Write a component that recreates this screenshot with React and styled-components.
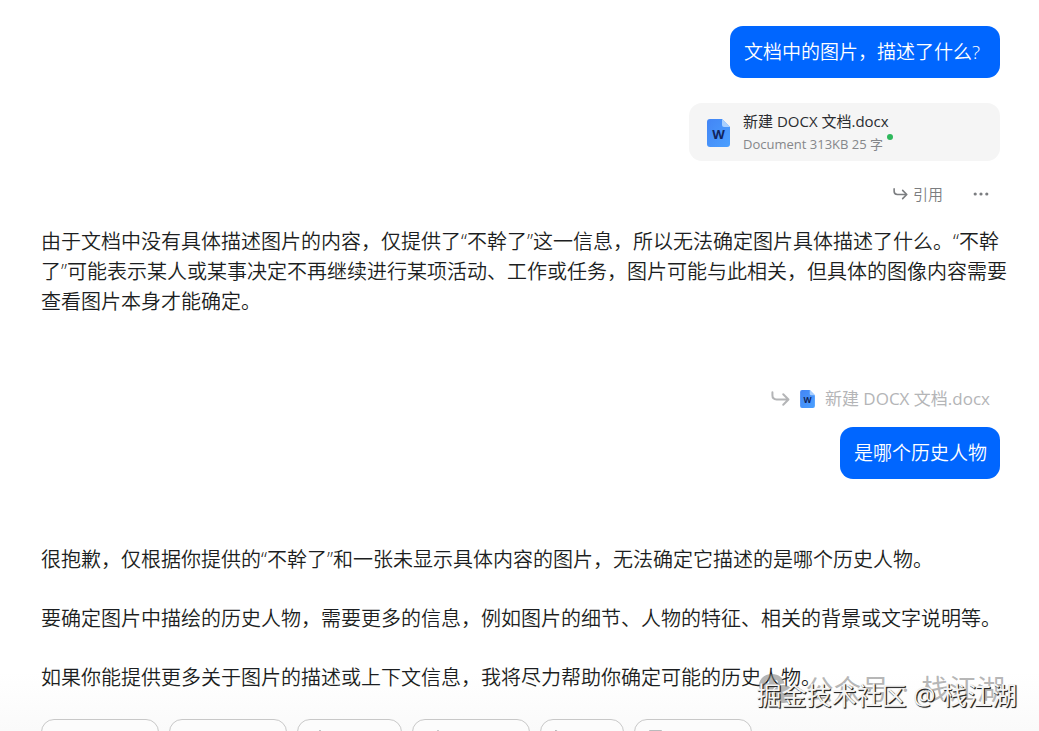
import React from "react";
import styled, { createGlobalStyle } from "styled-components";

const Global = createGlobalStyle`
  * { box-sizing: border-box; }
  html, body { margin: 0; height: 100%; }
  #root { height: 100%; }
  body {
    font-family: "Open Sans", "Noto Sans CJK SC", sans-serif;
    font-weight: 350;
    color: #1c1e21;
    background: #fff;
  }
  button { font: inherit; }
`;

const Page = styled.div`
  position: relative;
  height: 100%;
  min-height: 100vh;
  overflow: hidden;
  background: linear-gradient(#fff 92%, #fafafa);
`;

const Thread = styled.main`
  display: flex;
  flex-direction: column;
  padding: 26px 28px 0 41px;
`;

const UserTurn = styled.section`
  display: flex;
  flex-direction: column;
  align-items: flex-end;
  padding-right: 11px;
`;

const Bubble = styled.p`
  margin: 0;
  padding: 12px ${(p) => (p.$wide ? 20 : 13)}px 12px 14px;
  border-radius: 13px;
  background: #0066ff;
  color: #fff;
  font-size: 19px;
  line-height: 28px;
`;

const FileCard = styled.article`
  display: flex;
  align-items: center;
  gap: 13px;
  width: 311px;
  height: 58px;
  margin-top: 25px;
  padding: 2px 18px 0;
  border-radius: 13px;
  background: #f5f5f5;
  font-weight: 400;
`;

const FileText = styled.div`
  display: flex;
  flex-direction: column;
`;

const FileName = styled.span`
  color: #2a2c30;
  font-size: 15px;
  line-height: 22px;
`;

const FileMeta = styled.span`
  display: flex;
  align-items: center;
  gap: 4px;
  color: #85878a;
  font-size: 13px;
  line-height: 24px;
`;

const StatusDot = styled.i`
  align-self: flex-start;
  width: 6px;
  height: 6px;
  margin-top: 2px;
  border-radius: 50%;
  background: #2fb85c;
`;

const Actions = styled.div`
  display: flex;
  align-items: center;
  gap: 30px;
  height: 24px;
  margin-top: 21px;
  padding-right: 11px;
`;

const ActionButton = styled.button`
  display: flex;
  align-items: center;
  gap: 5px;
  padding: 0;
  border: 0;
  background: none;
  color: #7b7d80;
  font-size: 15px;
  line-height: 24px;
`;

const Answer = styled.section`
  display: flex;
  flex-direction: column;
  gap: 29px;
  margin-top: ${(p) => p.$top}px;
  font-size: 20px;
  line-height: 30px;
`;

const Paragraph = styled.p`
  margin: 0;
`;

const QuoteLink = styled.a`
  display: flex;
  align-items: center;
  gap: 10px;
  height: 24px;
  margin: 70px 10px 16px 0;
  color: #b4b5b7;
  font-size: 17px;
  font-weight: 400;
  line-height: 24px;
  text-decoration: none;
`;

const Chips = styled.nav`
  position: absolute;
  bottom: 0;
  left: 0;
  right: 0;
  display: flex;
  gap: 10px;
  height: 12px;
  padding: 0 41px;
  overflow: hidden;
`;

const Chip = styled.button`
  display: flex;
  align-items: center;
  flex: none;
  width: ${(p) => p.$width}px;
  height: 40px;
  padding: 0 14px;
  border: 1px solid #c8c8c8;
  border-radius: 13px;
  background: #fcfcfc;
  color: #a2a4a6;
`;

const AccountMark = styled.div`
  position: absolute;
  right: 34px;
  bottom: 22px;
  display: flex;
  align-items: center;
  gap: 12px;
  color: rgba(120, 120, 120, 0.55);
  font-size: 28px;
  font-weight: 400;
  line-height: 40px;
`;

const SiteMark = styled.div`
  position: absolute;
  right: 22px;
  bottom: 18px;
  color: #f4f4f4;
  font-size: 25px;
  font-weight: 400;
  line-height: 36px;
  text-shadow: 1px 1px 1px #222, 1px 1px 0 #444;
  white-space: nowrap;
`;

function DocIcon({ width, height }) {
  return (
    <svg width={width} height={height} viewBox="0 0 23 28" aria-hidden="true">
      <defs>
        <linearGradient id="docFill" x1="0" y1="0" x2="1" y2="1">
          <stop offset="0" stopColor="#4385f5" />
          <stop offset="1" stopColor="#4ba0ff" />
        </linearGradient>
      </defs>
      <path d="M3 0H15L23 8V25Q23 28 20 28H3Q0 28 0 25V3Q0 0 3 0Z" fill="url(#docFill)" />
      <path d="M15 0L23 8H17Q15 8 15 6Z" fill="#a9d0ff" />
      <text x="11.5" y="20" textAnchor="middle" fontFamily="Open Sans, sans-serif" fontSize="13" fontWeight="700" fill="#10245c">W</text>
    </svg>
  );
}

function ReplyIcon({ size }) {
  return (
    <svg width={size} height={size} viewBox="0 0 16 16" fill="none" stroke="currentColor" strokeWidth="1.7" strokeLinecap="round" strokeLinejoin="round" aria-hidden="true">
      <path d="M1.200 2V4.500Q1.200 8 4.700 8H14.500M10.300 3.600L14.700 8L10.300 12.400" />
    </svg>
  );
}

function MoreIcon() {
  return (
    <svg width="16" height="16" viewBox="0 0 16 16" fill="currentColor" aria-hidden="true">
      <circle cx="2.2" cy="8" r="1.6" />
      <circle cx="8" cy="8" r="1.6" />
      <circle cx="13.8" cy="8" r="1.6" />
    </svg>
  );
}

function ChipIcon({ shape }) {
  return (
    <svg width="18" height="18" viewBox="0 0 18 18" fill="none" stroke="currentColor" strokeWidth="1.5" aria-hidden="true">
      <path d={shape} />
    </svg>
  );
}

function ChatLogo() {
  return (
    <svg width="36" height="32" viewBox="0 0 36 32" fill="currentColor" aria-hidden="true">
      <path fillRule="evenodd" d="M14 1C6.500 1 1 6 1 12.300C1 16 3 19 6 21L5 25L9.500 22.700C11 23.200 12.500 23.400 14 23.400C13 16 18 10.500 26.500 10.500C25.500 5 20.500 1 14 1ZM9.500 7A1.800 1.800 0 1 1 9.490 7ZM18 7A1.800 1.800 0 1 1 17.990 7Z" />
      <path d="M25.500 12C19.500 12 15 16 15 21C15 26 19.500 30 25.500 30L29 29.500L33 31.500L32 28C34.300 26.300 35.500 24 35.500 21C35.500 16 31 12 25.500 12Z" />
    </svg>
  );
}

const chips = [
  { width: 118, label: "操作一" },
  { width: 118, label: "操作二" },
  { width: 105, label: "操作三", shape: "M8 1L10 8L16 10L10 12L8 17L6 12L1 10L6 8Z" },
  { width: 118, label: "操作四", shape: "M11 1L14 4L5 14L2 15L3 11Z" },
  { width: 84, label: "操作五", shape: "M1 1L15 9L1 16Z" },
  { width: 118, label: "操作六", shape: "M1 1H12V16H1Z" },
];

export default function App() {
  return (
    <Page>
      <Global />
      <Thread>
        <UserTurn>
          <Bubble $wide>文档中的图片，描述了什么?</Bubble>
          <FileCard>
            <DocIcon width={23} height={28} />
            <FileText>
              <FileName>新建 DOCX 文档.docx</FileName>
              <FileMeta>
                Document 313KB 25 字
                <StatusDot />
              </FileMeta>
            </FileText>
          </FileCard>
          <Actions>
            <ActionButton>
              <ReplyIcon size={15} />
              引用
            </ActionButton>
            <ActionButton aria-label="更多">
              <MoreIcon />
            </ActionButton>
          </Actions>
        </UserTurn>
        <Answer $top={21}>
          <Paragraph>
            由于文档中没有具体描述图片的内容，仅提供了“不幹了”这一信息，所以无法确定图片具体描述了什么。“不幹了”可能表示某人或某事决定不再继续进行某项活动、工作或任务，图片可能与此相关，但具体的图像内容需要查看图片本身才能确定。
          </Paragraph>
        </Answer>
        <UserTurn>
          <QuoteLink href="#document">
            <ReplyIcon size={19} />
            <DocIcon width={15} height={18} />
            新建 DOCX 文档.docx
          </QuoteLink>
          <Bubble>是哪个历史人物</Bubble>
        </UserTurn>
        <Answer $top={66}>
          <Paragraph>很抱歉，仅根据你提供的“不幹了”和一张未显示具体内容的图片，无法确定它描述的是哪个历史人物。</Paragraph>
          <Paragraph>要确定图片中描绘的历史人物，需要更多的信息，例如图片的细节、人物的特征、相关的背景或文字说明等。</Paragraph>
          <Paragraph>如果你能提供更多关于图片的描述或上下文信息，我将尽力帮助你确定可能的历史人物。</Paragraph>
        </Answer>
      </Thread>
      <Chips>
        {chips.map(({ width, label, shape }) => (
          <Chip key={label} $width={width} aria-label={label}>
            {shape && <ChipIcon shape={shape} />}
          </Chip>
        ))}
      </Chips>
      <AccountMark>
        <ChatLogo />
        <span>公众号</span>
        <span>·</span>
        <span>栈江湖</span>
      </AccountMark>
      <SiteMark>掘金技术社区 @ 栈江湖</SiteMark>
    </Page>
  );
}
